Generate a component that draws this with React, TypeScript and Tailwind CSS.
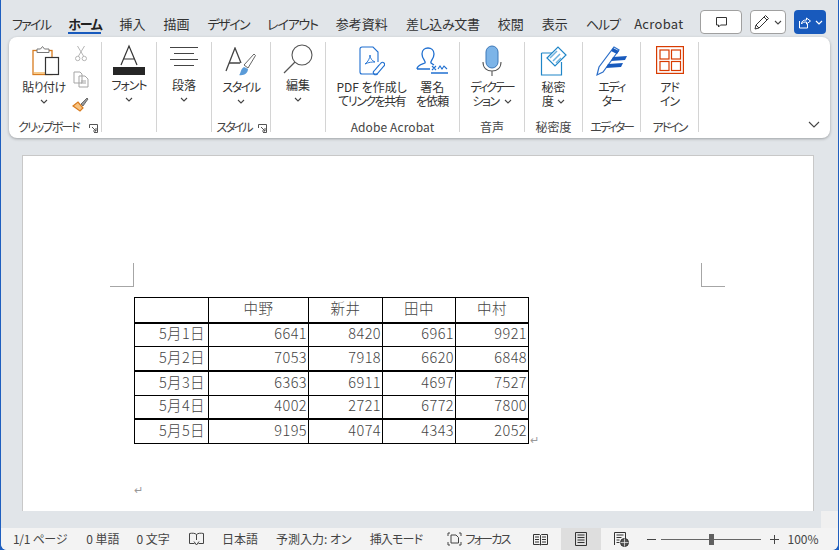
import React from "react";

const font = { fontFamily: '"Noto Sans CJK JP", "Liberation Sans", sans-serif' };

const Chev = ({ className = "" }: { className?: string }) => (
  <svg width="8" height="5" viewBox="0 0 8 5" className={className} fill="none" stroke="#444" strokeWidth="1.1">
    <path d="M1 1l3 3 3-3" />
  </svg>
);

const Launcher = () => (
  <svg width="9" height="9" viewBox="0 0 9 9" fill="none" stroke="#555" strokeWidth="1">
    <path d="M.5 4V.5h8v8H5" />
    <path d="M3 3l4 4M7 4v3H4" />
  </svg>
);

const tabs: [string, string][] = [
  ["ファイル", "tracking-[-1.700px]"],
  ["ホーム", "tracking-[-1.300px] font-bold text-[#222] border-b-2 border-[#185abd] h-[19px]"],
  ["挿入", ""],
  ["描画", ""],
  ["デザイン", "tracking-[-1.500px]"],
  ["レイアウト", "tracking-[-1.200px]"],
  ["参考資料", ""],
  ["差し込み文書", "tracking-[-0.300px]"],
  ["校閲", ""],
  ["表示", ""],
  ["ヘルプ", "tracking-[-1px]"],
  ["Acrobat", "tracking-[0.300px] -ml-[4px]"],
];

function Tabs() {
  return (
    <div className="h-[37px] flex items-start pl-[11px] pr-[12px] shrink-0 [font-feature-settings:'palt']">
      <div className="flex gap-[18px] pt-[15px] text-[13px] leading-[18px] text-[#333]">
        {tabs.map(([t, c]) => (
          <div key={t} className={`whitespace-nowrap ${c}`}>
            {t}
          </div>
        ))}
      </div>
      <div className="ml-auto flex gap-2 pt-[10px]">
        <div className="w-[42px] h-6 bg-white border border-[#a0a0a0] rounded flex items-center justify-center">
          <svg width="13" height="13" viewBox="0 0 13 13" fill="none" stroke="#333" strokeWidth="1"><path d="M1.500 1.500h10v7.500H5.500L3.500 11V9h-2z" /></svg>
        </div>
        <div className="w-9 h-6 bg-white border border-[#a0a0a0] rounded flex items-center justify-center gap-1">
          <svg width="16" height="16" viewBox="0 0 16 16" fill="none" stroke="#333" strokeWidth="1"><path d="M1 15l1-4L11.500 1.500l3 3L5 14zM2 11l3 3M10 3l3 3" /></svg>
          <Chev />
        </div>
        <div className="w-8 h-6 bg-[#185abd] rounded flex items-center justify-center gap-1">
          <svg width="13" height="13" viewBox="0 0 13 13" fill="none" stroke="#fff" strokeWidth="1"><path d="M1.500 5v7h8V8M3.500 8c0-3 2-4 5-4V2l4 3-4 3V6c-2 0-4 0-5 2z" /></svg>
          <svg width="8" height="5" viewBox="0 0 8 5" fill="none" stroke="#fff" strokeWidth="1.200"><path d="M1 1l3 3 3-3" /></svg>
        </div>
      </div>
    </div>
  );
}

function Group({ w, label, labelCls = "", launcher, children }: { w: string; label?: string; labelCls?: string; launcher?: boolean; children: React.ReactNode }) {
  return (
    <div className={`${w} h-[90px] shrink-0 flex flex-col border-r border-[#d4d4d4]`}>
      <div className="h-[79px] flex justify-center">{children}</div>
      <div className={`h-[11px] relative flex items-center justify-center text-[12px] leading-[16px] text-[#444] whitespace-nowrap ${launcher ? "pr-[14px]" : ""} ${labelCls}`}>
        {label}
        {launcher && (
          <div className="absolute right-[3px] bottom-[-1px]"><Launcher /></div>
        )}
      </div>
    </div>
  );
}

function Big({ icon, lines, chev, mt = "mt-[2px]", w = "" }: { icon: React.ReactNode; lines: React.ReactNode[]; chev?: boolean; mt?: string; w?: string }) {
  return (
    <div className={`flex flex-col items-center ${w}`}>
      <div className="h-[36px] flex items-start justify-center shrink-0">{icon}</div>
      <div className={`${mt} flex flex-col items-center text-[12px] leading-[14px] text-[#333] whitespace-nowrap`}>
        {lines.map((l, i) => (
          <div key={i}>{l}</div>
        ))}
        {chev && <Chev className="mt-[5px]" />}
      </div>
    </div>
  );
}

function Ribbon() {
  return (
    <div className="mx-[8px] h-[101px] bg-white rounded-lg shadow-[0_1px_3px_rgba(0,0,0,0.3)] shrink-0 flex pt-[5px] pl-[1px] relative text-[#333] [font-feature-settings:'palt']">
      <Group w="w-[92px]" label="クリップボード" labelCls="tracking-[-1.900px]" launcher>
        <div className="flex gap-[4px] pl-[10px] w-full">
          <Big
            w="w-[48px]"
            chev
            lines={[<span key="a" className="tracking-[-0.500px]">貼り付け</span>]}
            icon={
              <svg width="28" height="32" viewBox="0 0 28 32" fill="none" className="mt-[3px] ml-[3px]">
                <rect x="1" y="5.500" width="19" height="24" fill="#fff" stroke="#d87b1f" strokeWidth="1.300" />
                <rect x="2" y="27" width="17" height="2" fill="#f6c98a" />
                <path d="M5 7.500V4h3.500l2-2.500 2 2.500H17v3.500z" fill="#fff" stroke="#777" />
                <rect x="13.500" y="12.500" width="13" height="17" fill="#fff" stroke="#333" strokeWidth="1.200" />
              </svg>
            }
          />
          <div className="flex flex-col items-center gap-[9px] pt-[3px]">
            <svg width="12" height="17" viewBox="0 0 12 17" fill="none" stroke="#b5b5b5" strokeWidth="1"><path d="M2.500 1l6 10M9.500 1l-6 10" /><circle cx="2.700" cy="13.500" r="2.200" /><circle cx="9.300" cy="13.500" r="2.200" /></svg>
            <svg width="16" height="17" viewBox="0 0 16 17" fill="none" stroke="#a5a5a5" strokeWidth="1"><path d="M1 1h6l2 2v9H1zM6 5h6l3 3v8H6zM8 10h5M8 12h5" fill="#fff" /></svg>
            <svg width="17" height="15" viewBox="0 0 17 15" fill="none"><path d="M1 9l5-4 5 6-3 3z" fill="#f8c27e" stroke="#d87b1f" strokeWidth="1.200" /><path d="M9 7l6-6 1 1-5 7z" fill="#999" stroke="#555" strokeWidth=".8" /></svg>
          </div>
        </div>
      </Group>
      <Group w="w-[55px]">
        <Big
          chev
          mt="mt-0"
          lines={[<span key="a" className="tracking-[-1px]">フォント</span>]}
          icon={
            <svg width="32" height="32" viewBox="0 0 32 32" fill="none" className="mt-[2px]">
              <path d="M8 21L16 2l8 19M10.500 15h11" stroke="#333" strokeWidth="1.200" />
              <rect y="23" width="32" height="8" fill="#262626" />
            </svg>
          }
        />
      </Group>
      <Group w="w-[55px]">
        <Big
          chev
          mt="mt-0"
          lines={["段落"]}
          icon={
            <svg width="28" height="24" viewBox="0 0 28 24" fill="none" stroke="#444" strokeWidth="1" className="mt-[4px]">
              <path d="M0 1.500h28M4 7.500h20M0 13.500h28M4 19.500h20" />
            </svg>
          }
        />
      </Group>
      <Group w="w-[59px]" label="スタイル" labelCls="tracking-[-2px]" launcher>
        <Big
          chev
          lines={[<span key="a" className="tracking-[-1.500px]">スタイル</span>]}
          icon={
            <svg width="32" height="30" viewBox="0 0 32 30" fill="none" className="mt-[5px]">
              <path d="M1 24L10 1l6 15M4 16h11" stroke="#444" strokeWidth="1.300" />
              <path d="M19 18L29 7l1.500 1.500L23 21z" fill="#fff" stroke="#666" />
              <path d="M14 28c2-1 1-6 5-8l4 2c0 4-4 7-9 6z" fill="#5a9bd8" />
            </svg>
          }
        />
      </Group>
      <Group w="w-[55px]">
        <Big
          chev
          mt="mt-0"
          lines={["編集"]}
          icon={
            <svg width="30" height="30" viewBox="0 0 30 30" fill="none" stroke="#555" strokeWidth="1.100" className="mt-[2px]">
              <circle cx="19" cy="11" r="10" />
              <path d="M12 18L1 29" strokeWidth="1.300" />
            </svg>
          }
        />
      </Group>
      <Group w="w-[134px]" label="Adobe Acrobat" labelCls="tracking-[0.100px]">
        <div className="flex gap-[9px]">
          <Big
            lines={["PDF を作成し", <span key="a" className="tracking-[-1.500px]">てリンクを共有</span>]}
            icon={
              <svg width="26" height="32" viewBox="0 0 26 32" fill="none" stroke="#1f6fd0" strokeWidth="1.100" className="mt-[4px]">
                <path d="M1 3a2 2 0 012-2h11l5 5v10M19 28H3a2 2 0 01-2-2V3" />
                <path d="M6 18c3-2 5-6 5-9 0 3 2 6 5 7-3 0-6 0-10 2z" strokeWidth=".9" />
                <path d="M16 24l6-7a2 2 0 013 3l-7 8a2 2 0 01-3-3l5-6" />
              </svg>
            }
          />
          <Big
            lines={["署名", <span key="a" className="tracking-[-0.800px]">を依頼</span>]}
            icon={
              <svg width="32" height="28" viewBox="0 0 32 28" fill="none" stroke="#1f6fd0" strokeWidth="1.300" className="mt-[4px]">
                <path d="M1 23c0-4 6-5 8-6 1-2-3-4-3-9 0-4 3-6 6-6s6 2 6 6c0 5-4 7-3 9l3 2M1 23h13" />
                <path d="M16 20l4 4M20 20l-4 4M22 23l2-3 2 3 2-3 3 3" strokeWidth="1.100" />
                <path d="M15 27h17" strokeWidth="1.500" />
              </svg>
            }
          />
        </div>
      </Group>
      <Group w="w-[65px]" label="音声">
        <Big
          lines={[
            <span key="a" className="tracking-[-2px]">ディクテー</span>,
            <span key="x" className="inline-flex items-center gap-[5px] tracking-[-1.500px]">ション<Chev /></span>,
          ]}
          icon={
            <svg width="20" height="32" viewBox="0 0 20 32" fill="none" className="mt-[3px]">
              <rect x="4" y="1" width="12" height="22" rx="6" fill="#7cb4e8" stroke="#3d78b8" />
              <path d="M1 17c0 6 4 9 9 9s9-3 9-9M10 26v5" stroke="#555" strokeWidth="1.100" />
            </svg>
          }
        />
      </Group>
      <Group w="w-[58px]" label="秘密度">
        <Big
          lines={["秘密", <span key="x" className="inline-flex items-center gap-[3px]">度<Chev /></span>]}
          icon={
            <svg width="28" height="32" viewBox="0 0 28 32" fill="none" className="mt-[3px]">
              <path d="M1.500 8h14M1.500 8v22h20V17" stroke="#1f86c8" strokeWidth="1.200" />
              <path d="M7 13L18 2l8 8-11 11z" fill="#fff" stroke="#1f86c8" strokeWidth="1.200" />
              <path d="M10 13l7-7M13 16l7-7M16 18l5-5" stroke="#6fb2de" strokeWidth="1.500" />
            </svg>
          }
        />
      </Group>
      <Group w="w-[58px]" label="エディター" labelCls="tracking-[-2.200px]">
        <Big
          lines={[<span key="a" className="tracking-[-1.500px]">エディ</span>, <span key="b" className="tracking-[-1.500px]">ター</span>]}
          icon={
            <svg width="32" height="32" viewBox="0 0 32 32" fill="none" className="mt-[3px]">
              <path d="M1 30l2-8L18 2l5 3L7 27z" fill="#fff" stroke="#2c6fc9" strokeWidth="1.200" />
              <path d="M17 3l6 3-2 3-6-3z" fill="#185abd" />
              <path d="M17 12l14-1-2 4-14 1zM12 19l15-1-2 4-15 1z" fill="#185abd" />
            </svg>
          }
        />
      </Group>
      <Group w="w-[58px]" label="アドイン" labelCls="tracking-[-2px]">
        <Big
          lines={[<span key="a" className="tracking-[-1px]">アド</span>, <span key="b" className="tracking-[-1px]">イン</span>]}
          icon={
            <svg width="28" height="28" viewBox="0 0 28 28" fill="none" stroke="#d83b01" strokeWidth="1.200" className="mt-[4px]">
              <rect x=".6" y=".6" width="26.800" height="26.800" />
              <rect x="4" y="4" width="9" height="9" />
              <rect x="15.500" y="4" width="9" height="9" />
              <rect x="4" y="15.500" width="9" height="9" />
              <rect x="15.500" y="15.500" width="9" height="9" />
            </svg>
          }
        />
      </Group>
      <svg width="12" height="7" viewBox="0 0 12 7" fill="none" stroke="#444" strokeWidth="1.100" className="absolute right-[10px] bottom-[10px]">
        <path d="M1 1l5 5 5-5" />
      </svg>
    </div>
  );
}

const rows = [
  { d: "5月1日", v: [6641, 8420, 6961, 9921] },
  { d: "5月2日", v: [7053, 7918, 6620, 6848] },
  { d: "5月3日", v: [6363, 6911, 4697, 7527] },
  { d: "5月4日", v: [4002, 2721, 6772, 7800] },
  { d: "5月5日", v: [9195, 4074, 4343, 2052] },
];
const heads = ["中野", "新井", "田中", "中村"];

function Page() {
  return (
    <div className="ml-[21px] mr-[24px] mt-[17px] flex-1 bg-white border border-[#c8c8c8] border-b-0 relative pt-[141px] pl-[111px] overflow-hidden">
      <div className="absolute left-[87px] top-[107px] w-[24px] h-[24px] border-r border-b border-[#a6a6a6]" />
      <div className="absolute left-[678px] top-[107px] w-[24px] h-[24px] border-l border-b border-[#a6a6a6]" />
      <div className="flex items-end text-[14.500px] text-[#444] font-light tracking-[0.4px]">
        <table className="border-collapse w-[394px] table-fixed">
          <colgroup>
            <col className="w-[74px]" />
            <col className="w-[100px]" />
            <col className="w-[74px]" />
            <col className="w-[73px]" />
            <col className="w-[73px]" />
          </colgroup>
          <tbody>
            <tr className="h-[25px] border-b-2 border-black">
              <td className="border border-black" />
              {heads.map((h) => (
                <td key={h} className="border border-black text-center p-0 pb-[3px] leading-[18px]">{h}</td>
              ))}
            </tr>
            {rows.map((r, i) => (
              <tr key={r.d} className={`h-[24.200px] ${i % 2 === 1 ? "border-b-2" : "border-b"} border-black`}>
                <td className="border-x border-black text-right p-0 pr-[3px] pb-[3px] leading-[18px]">{r.d}</td>
                {r.v.map((x) => (
                  <td key={x} className="border-x border-black text-right p-0 pr-[1px] pb-[3px] leading-[18px]">{x}</td>
                ))}
              </tr>
            ))}
          </tbody>
        </table>
        <span className="text-[11px] leading-[11px] text-[#999] ml-[1px] mb-[-1px]">↵</span>
      </div>
      <div className="mt-[38px] text-[11px] leading-[14px] text-[#999]">↵</div>
    </div>
  );
}

function Status() {
  return (
    <div className="h-[22px] bg-[#f3f3f3] shrink-0 flex items-center pl-[12px] text-[12px] text-[#444] whitespace-nowrap [font-feature-settings:'palt']">
      <span className="tracking-[-0.300px]">1/1 ページ</span>
      <span className="ml-[19px]">0 単語</span>
      <span className="ml-[17px]">0 文字</span>
      <svg width="15" height="14" viewBox="0 0 15 14" fill="none" stroke="#444" strokeWidth="1" className="ml-[19px]">
        <path d="M7.500 2.500C6 1 3 1 .5 1.500v10h5M7.500 2.500V8M7.500 2.500C9 1 12 1 14.500 1.500v10h-5M5 9.500l2.500 3.500 2.500-3.500" />
      </svg>
      <span className="ml-[18px]">日本語</span>
      <span className="ml-[18px]">予測入力: オン</span>
      <span className="ml-[18px] tracking-[-0.800px]">挿入モード</span>
      <svg width="15" height="14" viewBox="0 0 15 14" fill="none" stroke="#444" strokeWidth="1" className="ml-[25px]">
        <path d="M1 4V1h2M12 1h2v3M1 10v3h2M12 13h2v-3M4 3h5l2.500 2.500V11H4z" />
      </svg>
      <span className="ml-[3px] tracking-[-1.800px]">フォーカス</span>
      <svg width="15" height="13" viewBox="0 0 15 13" fill="none" stroke="#333" strokeWidth="1" className="ml-[24px]">
        <path d="M.5 1.500h6l1 1 1-1h6v10h-6l-1 .5-1-.5h-6zM7.500 2.500V12M2 4h4M2 6.500h4M2 9h4M9 4h4M9 6.500h4M9 9h4" />
      </svg>
      <div className="ml-[13px] w-[40px] h-[22px] bg-[#dedede] flex items-center justify-center">
        <svg width="12" height="14" viewBox="0 0 12 14" fill="none" stroke="#333" strokeWidth="1">
          <path d="M.5.5h11v13H.5zM2.500 3h7M2.500 5.500h7M2.500 8h7M2.500 10.500h7" />
        </svg>
      </div>
      <svg width="15" height="15" viewBox="0 0 15 15" fill="none" stroke="#333" strokeWidth="1" className="ml-[13px]">
        <path d="M.5 13V.5h11V7M2.500 3h7M2.500 5.500h5M2.500 8h3M2.500 10.500h3" />
        <circle cx="10.500" cy="10.500" r="4" fill="#555" />
        <path d="M6.500 10.500h8M10.500 6.500v8" stroke="#f3f3f3" strokeWidth=".7" />
      </svg>
      <span className="ml-[18px] w-[9px] h-px bg-[#444]" />
      <div className="ml-[5px] w-[100px] h-px bg-[#666] relative">
        <div className="absolute left-[48px] top-[-5px] w-[5px] h-[11px] bg-[#606060]" />
      </div>
      <span className="ml-[9px] w-[9px] h-[9px] relative">
        <span className="absolute left-0 top-[4px] w-[9px] h-px bg-[#444]" />
        <span className="absolute left-[4px] top-0 w-px h-[9px] bg-[#444]" />
      </span>
      <span className="ml-[8px]">100%</span>
    </div>
  );
}

export default function App() {
  return (
    <div className="w-[839px] h-[550px] bg-[#1f5fbf]">
      <div className="ml-[1px] mr-[1px] h-[550px] bg-[#e1e5e9] flex flex-col overflow-hidden rounded-b-md" style={font}>
        <Tabs />
        <Ribbon />
        <Page />
        <div className="h-[17px] shrink-0 flex justify-end">
          <div className="w-[17px] h-[17px] bg-[#f0f0f0]" />
        </div>
        <Status />
      </div>
    </div>
  );
}
